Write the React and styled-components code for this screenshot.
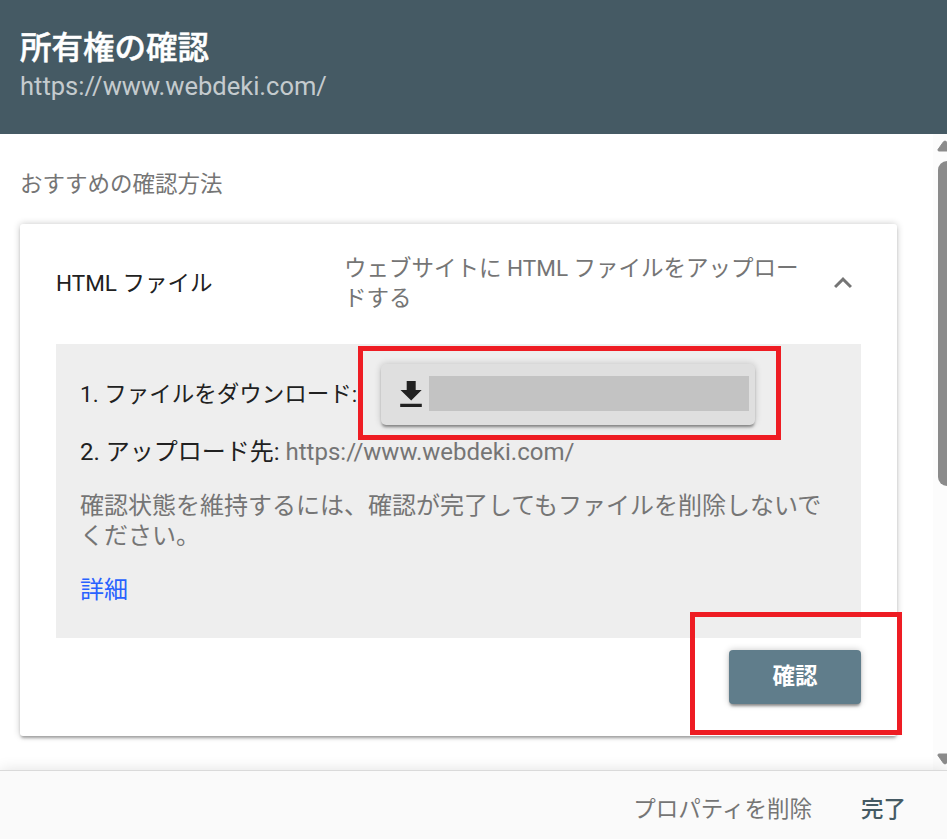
import React from 'react';
import styled, { createGlobalStyle } from 'styled-components';

const GlobalStyle = createGlobalStyle`
    * {
        box-sizing: border-box;
    }
    body {
        margin: 0;
        background: #fff;
        overflow: hidden;
        font-family: Roboto, 'Noto Sans CJK JP', sans-serif;
        font-size: 22.5px;
        line-height: 30px;
        color: #212121;
    }
    h1, p {
        margin: 0;
    }
    button {
        border: 0;
        padding: 0;
        font: inherit;
        cursor: pointer;
    }
`

const Dialog = styled.div`
    position: relative;
    display: flex;
    flex-direction: column;
    width: 947px;
    height: 839px;
    overflow: hidden;
`

const Header = styled.header`
    height: 134px;
    padding: 28px 20px 0;
    background: #455a64;
    color: #fff;
`

const Title = styled.h1`
    font-size: 31.5px;
    line-height: 42px;
    font-weight: 500;
    -webkit-text-stroke: 0.5px #fff;
`

const SiteUrl = styled.p`
    font-size: 25.5px;
    line-height: 33px;
    color: rgba(255, 255, 255, 0.7);
`

const Body = styled.div`
    flex: 1;
    display: flex;
    min-height: 0;
`

const Content = styled.main`
    flex: 1;
    padding: 35px 36px 0 20px;
`

const SectionLabel = styled.p`
    color: #757575;
    margin-bottom: 25px;
`

const Card = styled.section`
    width: 877px;
    height: 512px;
    padding: 0 36px;
    border-radius: 3px;
    background: #fff;
    box-shadow: 0 3px 3px -1px rgba(0, 0, 0, 0.3), 0 0 7px rgba(0, 0, 0, 0.22);
`

const CardHeader = styled.div`
    display: flex;
    align-items: center;
    height: 120px;
    padding-bottom: 2px;
`

const MethodName = styled.p`
    width: 288px;
`

const MethodInfo = styled.p`
    width: 460px;
    margin-right: 21px;
    color: #757575;
`

const Panel = styled.div`
    height: 294px;
    padding: 20px 24px 0;
    background: #eee;
`

const Step = styled.div`
    display: flex;
    align-items: center;
    height: 61px;
    white-space: nowrap;
`

const StepText = styled.p`
    width: 277px;
    padding-bottom: 2px;
`

const DownloadButton = styled.button`
    display: flex;
    align-items: center;
    width: 374px;
    height: 61px;
    margin-left: 24px;
    padding: 0 0 3px 16px;
    border-radius: 5px;
    background: #dfdfdf;
    box-shadow: 0 3px 3px -1px rgba(0, 0, 0, 0.4), 0 0 7px rgba(0, 0, 0, 0.2);
`

const FileName = styled.span`
    width: 320px;
    height: 35px;
    margin-left: 5px;
    background: #c3c3c3;
`

const Target = styled.p`
    margin-top: 12px;
    font-size: 24px;
    span {
        color: #757575;
    }
`

const Note = styled.p`
    margin-top: 24px;
    font-size: 24px;
    color: #757575;
`

const MoreLink = styled.a`
    display: block;
    margin-top: 24px;
    font-size: 24px;
    color: #2962ff;
`

const Actions = styled.div`
    display: flex;
    justify-content: flex-end;
    padding-top: 12px;
`

const VerifyButton = styled.button`
    width: 132px;
    height: 54px;
    padding-bottom: 2px;
    border-radius: 4px;
    background: #607d8b;
    color: #fff;
    font-weight: 700;
    box-shadow: 0 3px 3px -1px rgba(0, 0, 0, 0.4), 0 0 7px rgba(0, 0, 0, 0.22);
`

const Scrollbar = styled.div`
    display: flex;
    flex-direction: column;
    width: 14px;
    padding: 6px 0 5px 4px;
    background: #fcfcfc;
    overflow: hidden;
    svg {
        flex: none;
    }
`

const Thumb = styled.div`
    width: 18px;
    height: 325px;
    margin: 9px 0 auto 1px;
    border-radius: 9px;
    background: #8b8b8b;
`

const Footer = styled.footer`
    position: relative;
    display: flex;
    justify-content: flex-end;
    gap: 49px;
    height: 69px;
    padding: 8px 41px 0 0;
    border-top: 1px solid #dadada;
    background: #fafafa;
    box-shadow: 0 0 14px rgba(0, 0, 0, 0.12);
`

const TextButton = styled.button`
    background: none;
    color: ${props => props.$primary ? '#455a64' : '#757575'};
    font-weight: ${props => props.$primary ? 500 : 400};
`

// red frame drawn on top of the dialog
const Highlight = styled.div`
    position: absolute;
    left: ${props => props.$x}px;
    top: ${props => props.$y}px;
    width: ${props => props.$w}px;
    height: ${props => props.$h}px;
    border: 5px solid #ee1c23;
    pointer-events: none;
`

function DownloadIcon () {
    return (
        <svg width="27" height="36" viewBox="0 0 27 36">
            <path d="M9.7 6h9v9h6L14.2 25.5 3.5 15h6.2zM3.2 28.8h21.6v3.1H3.2z" fill="#212121"/>
        </svg>
    )
}

function ChevronIcon () {
    return (
        <svg width="36" height="36" viewBox="0 0 24 24">
            <path d="M12 8l-6 6 1.41 1.41L12 10.83l4.59 4.58L18 14z" fill="#757575"/>
        </svg>
    )
}

function Arrow ({ down }) {
    return (
        <svg width="16" height="12" viewBox="0 0 16 12">
            <path
                d="M1 9.5L6.5 1.8Q8 .2 9.5 1.8L15 9.5Q15.4 11 14 11H2Q.6 11 1 9.5z"
                transform={down ? 'rotate(180 8 6)' : undefined}
                fill="#8b8b8b"
                stroke="#8b8b8b"
            />
        </svg>
    )
}

function App () {
    return (
        <Dialog>
            <GlobalStyle/>
            <Header>
                <Title>所有権の確認</Title>
                <SiteUrl>https://www.webdeki.com/</SiteUrl>
            </Header>
            <Body>
                <Content>
                    <SectionLabel>おすすめの確認方法</SectionLabel>
                    <Card>
                        <CardHeader>
                            <MethodName>HTML ファイル</MethodName>
                            <MethodInfo>
                                ウェブサイトに HTML ファイルをアップロー<br/>ドする
                            </MethodInfo>
                            <ChevronIcon/>
                        </CardHeader>
                        <Panel>
                            <Step>
                                <StepText>1. ファイルをダウンロード:</StepText>
                                <DownloadButton aria-label="ダウンロード">
                                    <DownloadIcon/>
                                    <FileName/>
                                </DownloadButton>
                            </Step>
                            <Target>
                                2. アップロード先: <span>https://www.webdeki.com/</span>
                            </Target>
                            <Note>
                                確認状態を維持するには、確認が完了してもファイルを削除しないで<br/>ください。
                            </Note>
                            <MoreLink>詳細</MoreLink>
                        </Panel>
                        <Actions>
                            <VerifyButton>確認</VerifyButton>
                        </Actions>
                    </Card>
                </Content>
                <Scrollbar>
                    <Arrow/>
                    <Thumb/>
                    <Arrow down/>
                </Scrollbar>
            </Body>
            <Footer>
                <TextButton>プロパティを削除</TextButton>
                <TextButton $primary>完了</TextButton>
            </Footer>
            <Highlight $x={358} $y={346} $w={423} $h={94}/>
            <Highlight $x={690} $y={612} $w={212} $h={123}/>
        </Dialog>
    )
}

export default App;
